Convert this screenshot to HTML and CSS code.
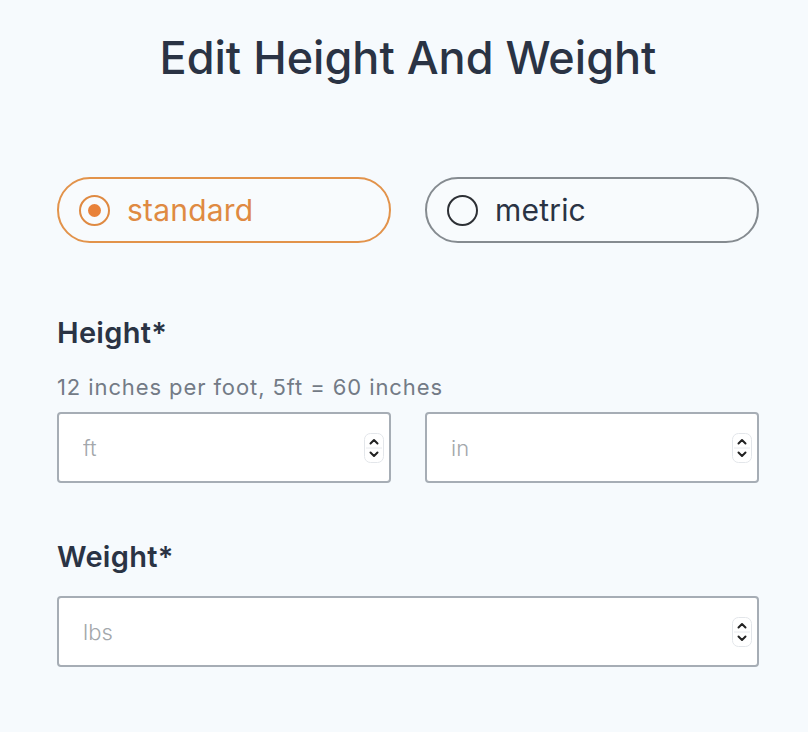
FILE: index.html
```html
<!DOCTYPE html>
<html lang="en">
<head>
<meta charset="utf-8">
<title>Edit Height And Weight</title>
<link rel="stylesheet" href="styles.css">
</head>
<body>
<main class="page">
  <h1 class="title">Edit Height And Weight</h1>

  <div class="units">
    <label class="pill pill-active">
      <span class="radio radio-on"><span class="dot"></span></span>
      <span class="pill-text">standard</span>
    </label>
    <label class="pill">
      <span class="radio"></span>
      <span class="pill-text">metric</span>
    </label>
  </div>

  <section class="field field-height">
    <h2 class="label">Height*</h2>
    <p class="hint">12 inches per foot, 5ft = 60 inches</p>
    <div class="row">
      <div class="box">
        <input class="num" type="text" placeholder="ft">
        <svg class="spin" width="20" height="30" viewBox="0 0 20 30" aria-hidden="true">
          <rect x="0.5" y="0.5" width="19" height="29" rx="6" fill="#fff" stroke="#e3e6ea"/>
          <line x1="2" y1="15" x2="18" y2="15" stroke="#e8eaee"/>
          <path d="M6.5 10.5 L10 7 L13.5 10.5" fill="none" stroke="#222" stroke-width="2" stroke-linecap="round" stroke-linejoin="round"/>
          <path d="M6.5 19.5 L10 23 L13.5 19.5" fill="none" stroke="#222" stroke-width="2" stroke-linecap="round" stroke-linejoin="round"/>
        </svg>
      </div>
      <div class="box">
        <input class="num" type="text" placeholder="in">
        <svg class="spin" width="20" height="30" viewBox="0 0 20 30" aria-hidden="true">
          <rect x="0.5" y="0.5" width="19" height="29" rx="6" fill="#fff" stroke="#e3e6ea"/>
          <line x1="2" y1="15" x2="18" y2="15" stroke="#e8eaee"/>
          <path d="M6.5 10.5 L10 7 L13.5 10.5" fill="none" stroke="#222" stroke-width="2" stroke-linecap="round" stroke-linejoin="round"/>
          <path d="M6.5 19.5 L10 23 L13.5 19.5" fill="none" stroke="#222" stroke-width="2" stroke-linecap="round" stroke-linejoin="round"/>
        </svg>
      </div>
    </div>
  </section>

  <section class="field field-weight">
    <h2 class="label">Weight*</h2>
    <div class="box">
      <input class="num" type="text" placeholder="lbs">
      <svg class="spin" width="20" height="30" viewBox="0 0 20 30" aria-hidden="true">
        <rect x="0.5" y="0.5" width="19" height="29" rx="6" fill="#fff" stroke="#e3e6ea"/>
        <line x1="2" y1="15" x2="18" y2="15" stroke="#e8eaee"/>
        <path d="M6.5 10.5 L10 7 L13.5 10.5" fill="none" stroke="#222" stroke-width="2" stroke-linecap="round" stroke-linejoin="round"/>
        <path d="M6.5 19.5 L10 23 L13.5 19.5" fill="none" stroke="#222" stroke-width="2" stroke-linecap="round" stroke-linejoin="round"/>
      </svg>
    </div>
  </section>
</main>
</body>
</html>
```

FILE: styles.css
```css
* { box-sizing: border-box; }

html, body {
  margin: 0;
  padding: 0;
  background: #f6fafd;
}

body {
  font-family: Inter, "Noto Sans", "Liberation Sans", sans-serif;
  color: #2a3344;
}

.page {
  width: 702px;
  margin-left: 57px;
  padding-top: 30px;
}

.title {
  margin: 0;
  text-align: center;
  font-size: 45px;
  font-weight: 500;
  line-height: 56px;
  color: #2a3344;
  letter-spacing: 0;
}

.units {
  display: flex;
  gap: 34px;
  margin-top: 91px;
}

.pill {
  flex: 1;
  min-width: 0;
  height: 66px;
  border: 2px solid #858b90;
  border-radius: 33px;
  display: flex;
  align-items: center;
  padding-left: 20px;
  gap: 17px;
  background: #f8fbfd;
}

.pill-active {
  border-color: #e2934b;
}

.pill-text {
  font-size: 30px;
  color: #2a3344;
  letter-spacing: 0.2px;
}

.pill-active .pill-text {
  color: #df8a42;
}

.radio {
  width: 31px;
  height: 31px;
  border-radius: 50%;
  border: 2px solid #2d3035;
  display: flex;
  align-items: center;
  justify-content: center;
  flex: none;
}

.radio-on {
  border-color: #df8a42;
}

.dot {
  width: 13px;
  height: 13px;
  border-radius: 50%;
  background: #e8823a;
}

.field-height {
  margin-top: 73px;
}

.field-weight {
  margin-top: 57px;
}

.label {
  margin: 0;
  font-size: 29px;
  font-weight: 600;
  line-height: 34px;
  color: #2a3344;
  letter-spacing: 0.3px;
}

.hint {
  margin: 24px 0 0;
  font-size: 22px;
  line-height: 26px;
  color: #737b86;
  letter-spacing: 0.9px;
}

.field-weight .label {
  margin-bottom: 22px;
}

.row {
  display: flex;
  gap: 34px;
  margin-top: 12px;
}

.row .box {
  flex: 1;
}

.box {
  min-width: 0;
  height: 71px;
  background: #fff;
  border: 2px solid #a6adb5;
  border-radius: 4px;
  display: flex;
  align-items: center;
  padding: 0 5px 0 24px;
}

.num {
  flex: 1;
  width: 0;
  min-width: 0;
  border: 0;
  outline: 0;
  background: transparent;
  font-family: Inter, "Noto Sans", "Liberation Sans", sans-serif;
  font-size: 22px;
  color: #2a3344;
  padding: 0;
}

.num::placeholder {
  color: #a3a7ab;
  font-weight: 300;
}

.spin {
  flex: none;
  display: block;
}
```
